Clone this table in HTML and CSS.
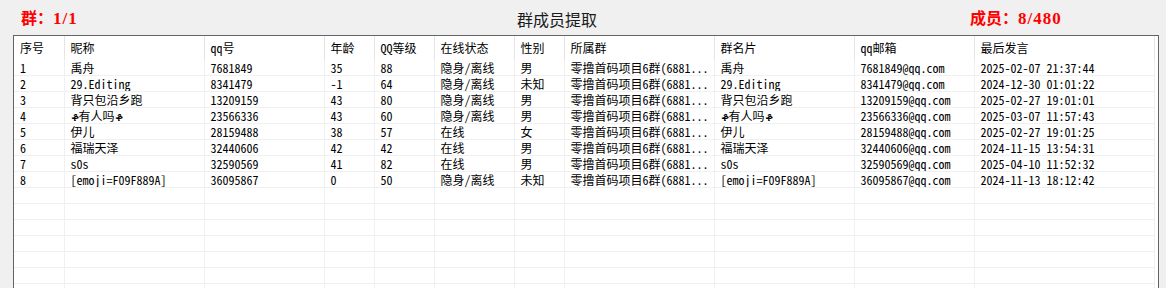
FILE: index.html
```html
<!DOCTYPE html>
<html lang="zh">
<head>
<meta charset="utf-8">
<title>群成员提取</title>
<link rel="stylesheet" href="styles.css">
</head>
<body>
<div class="app">
  <header class="topbar">
    <span class="stat stat-left">群：<span class="num">1/1</span></span>
    <span class="title">群成员提取</span>
    <span class="stat stat-right">成员：<span class="num">8/480</span></span>
  </header>
  <div class="grid-box">
    <table class="grid">
      <colgroup>
        <col class="c1"><col class="c2"><col class="c3"><col class="c4"><col class="c5"><col class="c6"><col class="c7"><col class="c8"><col class="c9"><col class="c10"><col class="c11">
      </colgroup>
      <thead>
        <tr><th>序号</th><th>昵称</th><th>qq号</th><th>年龄</th><th>QQ等级</th><th>在线状态</th><th>性别</th><th>所属群</th><th>群名片</th><th>qq邮箱</th><th>最后发言</th></tr>
      </thead>
      <tbody>
        <tr><td>1</td><td>禹舟</td><td>7681849</td><td>35</td><td>88</td><td>隐身/离线</td><td>男</td><td>零撸首码项目6群(6881...</td><td>禹舟</td><td>7681849@qq.com</td><td>2025-02-07 21:37:44</td></tr>
        <tr><td>2</td><td>29.Editing</td><td>8341479</td><td>-1</td><td>64</td><td>隐身/离线</td><td>未知</td><td>零撸首码项目6群(6881...</td><td>29.Editing</td><td>8341479@qq.com</td><td>2024-12-30 01:01:22</td></tr>
        <tr><td>3</td><td>背只包沿乡跑</td><td>13209159</td><td>43</td><td>80</td><td>隐身/离线</td><td>男</td><td>零撸首码项目6群(6881...</td><td>背只包沿乡跑</td><td>13209159@qq.com</td><td>2025-02-27 19:01:01</td></tr>
        <tr><td>4</td><td>ቆ有人吗ቆ</td><td>23566336</td><td>43</td><td>60</td><td>隐身/离线</td><td>男</td><td>零撸首码项目6群(6881...</td><td>ቆ有人吗ቆ</td><td>23566336@qq.com</td><td>2025-03-07 11:57:43</td></tr>
        <tr><td>5</td><td>伊儿</td><td>28159488</td><td>38</td><td>57</td><td>在线</td><td>女</td><td>零撸首码项目6群(6881...</td><td>伊儿</td><td>28159488@qq.com</td><td>2025-02-27 19:01:25</td></tr>
        <tr><td>6</td><td>福瑞天泽</td><td>32440606</td><td>42</td><td>42</td><td>在线</td><td>男</td><td>零撸首码项目6群(6881...</td><td>福瑞天泽</td><td>32440606@qq.com</td><td>2024-11-15 13:54:31</td></tr>
        <tr><td>7</td><td>s0s</td><td>32590569</td><td>41</td><td>82</td><td>在线</td><td>男</td><td>零撸首码项目6群(6881...</td><td>s0s</td><td>32590569@qq.com</td><td>2025-04-10 11:52:32</td></tr>
        <tr><td>8</td><td>[emoji=F09F889A]</td><td>36095867</td><td>0</td><td>50</td><td>隐身/离线</td><td>未知</td><td>零撸首码项目6群(6881...</td><td>[emoji=F09F889A]</td><td>36095867@qq.com</td><td>2024-11-13 18:12:42</td></tr>
        <tr><td></td><td></td><td></td><td></td><td></td><td></td><td></td><td></td><td></td><td></td><td></td></tr>
        <tr><td></td><td></td><td></td><td></td><td></td><td></td><td></td><td></td><td></td><td></td><td></td></tr>
        <tr><td></td><td></td><td></td><td></td><td></td><td></td><td></td><td></td><td></td><td></td><td></td></tr>
        <tr><td></td><td></td><td></td><td></td><td></td><td></td><td></td><td></td><td></td><td></td><td></td></tr>
        <tr><td></td><td></td><td></td><td></td><td></td><td></td><td></td><td></td><td></td><td></td><td></td></tr>
        <tr><td></td><td></td><td></td><td></td><td></td><td></td><td></td><td></td><td></td><td></td><td></td></tr>
        <tr><td></td><td></td><td></td><td></td><td></td><td></td><td></td><td></td><td></td><td></td><td></td></tr>
      </tbody>
    </table>
  </div>
</div>
</body>
</html>
```

FILE: styles.css
```css
html, body {
  margin: 0;
  padding: 0;
  background: #f0f0f0;
}

.app {
  width: 1166px;
  height: 288px;
  overflow: hidden;
  font-family: "Noto Sans Mono CJK SC", "Liberation Mono", "Noto Sans CJK SC", monospace;
  color: #000;
}

.topbar {
  height: 35px;
  display: grid;
  grid-template-columns: 517px 453px auto;
  align-items: center;
}

.stat {
  color: #ff0000;
  font-weight: bold;
  font-size: 16px;
  font-family: "Liberation Serif", "Noto Sans CJK SC", serif;
  line-height: 16px;
  padding-top: 3px;
}

.num {
  letter-spacing: 1px;
  font-size: 17px;
}

.stat-left {
  padding-left: 21px;
}

.title {
  font-family: "Noto Sans CJK SC", sans-serif;
  font-size: 16px;
  line-height: 16px;
  padding-top: 2px;
  color: #1a1a1a;
}

.grid-box {
  margin-left: 13px;
  width: 1144px;
  height: 253px;
  border: 1px solid #646464;
  border-bottom: none;
  background: #fff;
  overflow: hidden;
}

.grid {
  border-collapse: collapse;
  table-layout: fixed;
  width: 1140px;
  font-size: 12px;
}

.c1 { width: 50px; }
.c2 { width: 140px; }
.c3 { width: 120px; }
.c4 { width: 50px; }
.c5 { width: 60px; }
.c6 { width: 80px; }
.c7 { width: 50px; }
.c8 { width: 150px; }
.c9 { width: 140px; }
.c10 { width: 120px; }
.c11 { width: 180px; }

.grid th {
  height: 24px;
  padding: 0 0 0 6px;
  text-align: left;
  font-weight: normal;
  border-right: 1px solid #e5e5e5;
  line-height: 24px;
  white-space: nowrap;
  overflow: hidden;
}

.grid td {
  height: 15px;
  padding: 0 0 0 6px;
  line-height: 15px;
  border-right: 1px solid #f0f0f0;
  border-bottom: 1px solid #f0f0f0;
  white-space: nowrap;
  overflow: hidden;
}
```
